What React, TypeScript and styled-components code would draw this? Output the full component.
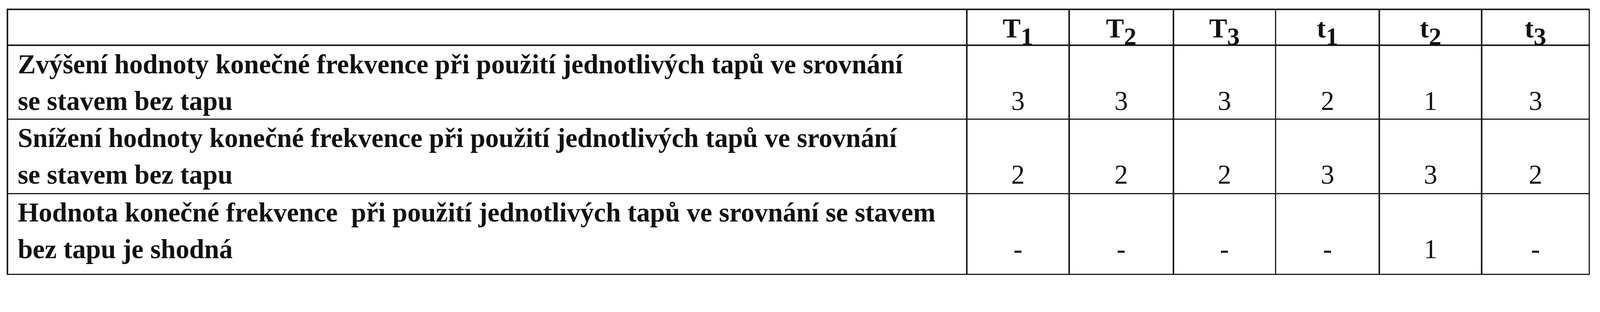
import React from "react";
import styled, { createGlobalStyle } from "styled-components";

/* All sizes are expressed relative to the 4331px-wide frame so that the
   layout scales with the viewport width. */
const u = (n: number) => `${((n * 100) / 4331).toFixed(5)}vw`;

const GlobalStyle = createGlobalStyle`
  html, body {
    margin: 0;
    padding: 0;
    background: #ffffff;
    overflow: hidden;
  }
  body {
    font-family: "Liberation Serif", "Times New Roman", serif;
    color: #111111;
  }
`;

const Table = styled.div`
  display: grid;
  grid-template-columns: ${u(2593)} ${u(273)} ${u(278)} ${u(273)} ${u(277)} ${u(273)} ${u(287)};
  grid-template-rows: ${u(94)} ${u(196)} ${u(198)} ${u(215)};
  gap: ${u(4)};
  padding: ${u(4)};
  width: max-content;
  margin: ${u(23)} 0 0 ${u(18)};
  background: #1b1b1b;
  font-family: "Liberation Serif", "Times New Roman", serif;
  font-size: ${u(73)};
  line-height: ${u(99)};
  color: #111111;
`;

const Cell = styled.div`
  background: #ffffff;
  overflow: visible;
`;

const HeadCell = styled(Cell)`
  text-align: center;
  font-weight: 700;
  white-space: nowrap;
`;

const Sub = styled.span`
  font-size: ${u(68)};
  line-height: 0;
  vertical-align: -${u(20)};
  font-weight: 700;
`;

const LabelCell = styled(Cell)`
  padding-left: ${u(26)};
  font-weight: 700;
`;

const Line = styled.span`
  display: block;
  white-space: pre;
`;

const ValueCell = styled(Cell)`
  padding-top: ${u(99)};
  text-align: center;
  font-weight: 400;
`;

const heads: [string, string][] = [
  ["T", "1"],
  ["T", "2"],
  ["T", "3"],
  ["t", "1"],
  ["t", "2"],
  ["t", "3"],
];

const rows: { lines: string[]; values: string[] }[] = [
  {
    lines: [
      "Zvýšení hodnoty konečné frekvence při použití jednotlivých tapů ve srovnání",
      "se stavem bez tapu",
    ],
    values: ["3", "3", "3", "2", "1", "3"],
  },
  {
    lines: [
      "Snížení hodnoty konečné frekvence při použití jednotlivých tapů ve srovnání",
      "se stavem bez tapu",
    ],
    values: ["2", "2", "2", "3", "3", "2"],
  },
  {
    lines: [
      "Hodnota konečné frekvence  při použití jednotlivých tapů ve srovnání se stavem",
      "bez tapu je shodná",
    ],
    values: ["-", "-", "-", "-", "1", "-"],
  },
];

export default function App() {
  return (
    <>
      <GlobalStyle />
      <Table>
        <HeadCell />
        {heads.map(([base, sub], i) => (
          <HeadCell key={`h${i}`}>
            {base}
            <Sub>{sub}</Sub>
          </HeadCell>
        ))}
        {rows.map((row, r) => (
          <React.Fragment key={`r${r}`}>
            <LabelCell>
              {row.lines.map((l, k) => (
                <Line key={k}>{l}</Line>
              ))}
            </LabelCell>
            {row.values.map((v, c) => (
              <ValueCell key={`v${r}-${c}`}>{v}</ValueCell>
            ))}
          </React.Fragment>
        ))}
      </Table>
    </>
  );
}
